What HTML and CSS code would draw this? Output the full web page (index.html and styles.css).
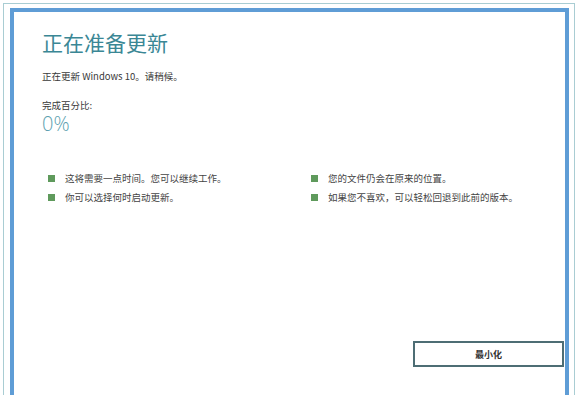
FILE: index.html
```html
<!DOCTYPE html>
<html lang="zh">
<head>
<meta charset="utf-8">
<link rel="stylesheet" href="styles.css">
</head>
<body>
<div class="outer">
  <div class="frame">
    <div class="content">
      <h1 class="title">正在准备更新</h1>
      <p class="sub">正在更新 Windows 10。请稍候。</p>
      <p class="label">完成百分比:</p>
      <p class="pct">0%</p>
      <div class="bullets">
        <div class="item"><span class="sq"></span>这将需要一点时间。您可以继续工作。</div>
        <div class="item"><span class="sq"></span>您的文件仍会在原来的位置。</div>
        <div class="item"><span class="sq"></span>你可以选择何时启动更新。</div>
        <div class="item"><span class="sq"></span>如果您不喜欢，可以轻松回退到此前的版本。</div>
      </div>
      <div class="actions">
        <button class="btn">最小化</button>
      </div>
    </div>
  </div>
</div>
</body>
</html>
```

FILE: styles.css
```css
html, body {
  margin: 0;
  padding: 0;
  background: #ffffff;
  overflow: hidden;
}
body {
  font-family: "Noto Sans CJK SC", "Noto Sans", sans-serif;
  color: #333;
}
.outer {
  margin: 3px 0 0 3px;
  width: 572px;
  height: 392px;
  border: 1px solid #a9cdd3;
  border-bottom: none;
  padding: 4px 5px 0 6px;
  box-sizing: border-box;
}
.frame {
  border: 4px solid #5f9dd6;
  border-bottom: none;
  height: 387px;
  box-sizing: border-box;
}
.content {
  padding: 14px 0 0 28px;
}
.title {
  margin: 0;
  font-size: 21px;
  line-height: 32px;
  font-weight: 400;
  color: #3a8795;
}
.sub {
  margin: 11px 0 0;
  font-size: 9.5px;
  line-height: 14px;
  color: #3a3a3a;
}
.label {
  margin: 15px 0 0;
  font-size: 9.5px;
  line-height: 14px;
  color: #3a3a3a;
}
.pct {
  margin: 0;
  font-family: "Open Sans", sans-serif;
  font-weight: 300;
  font-size: 20px;
  line-height: 24px;
  color: #5d9fb0;
}
.bullets {
  margin-top: 35px;
  display: grid;
  grid-template-columns: 263px 1fr;
  row-gap: 5px;
  padding-left: 6px;
}
.item {
  display: flex;
  align-items: center;
  gap: 10px;
  font-size: 9.5px;
  line-height: 14px;
  color: #444;
}
.sq {
  width: 7px;
  height: 7px;
  background: #5f9a5c;
  flex: none;
}
.actions {
  display: flex;
  justify-content: flex-end;
  margin-top: 137px;
  padding-right: 1px;
}
.btn {
  width: 151px;
  height: 26px;
  border: 2px solid #4d6d74;
  background: #ffffff;
  font-family: "Noto Sans CJK SC", sans-serif;
  font-size: 9px;
  font-weight: 700;
  color: #333;
  padding: 0;
}
```
